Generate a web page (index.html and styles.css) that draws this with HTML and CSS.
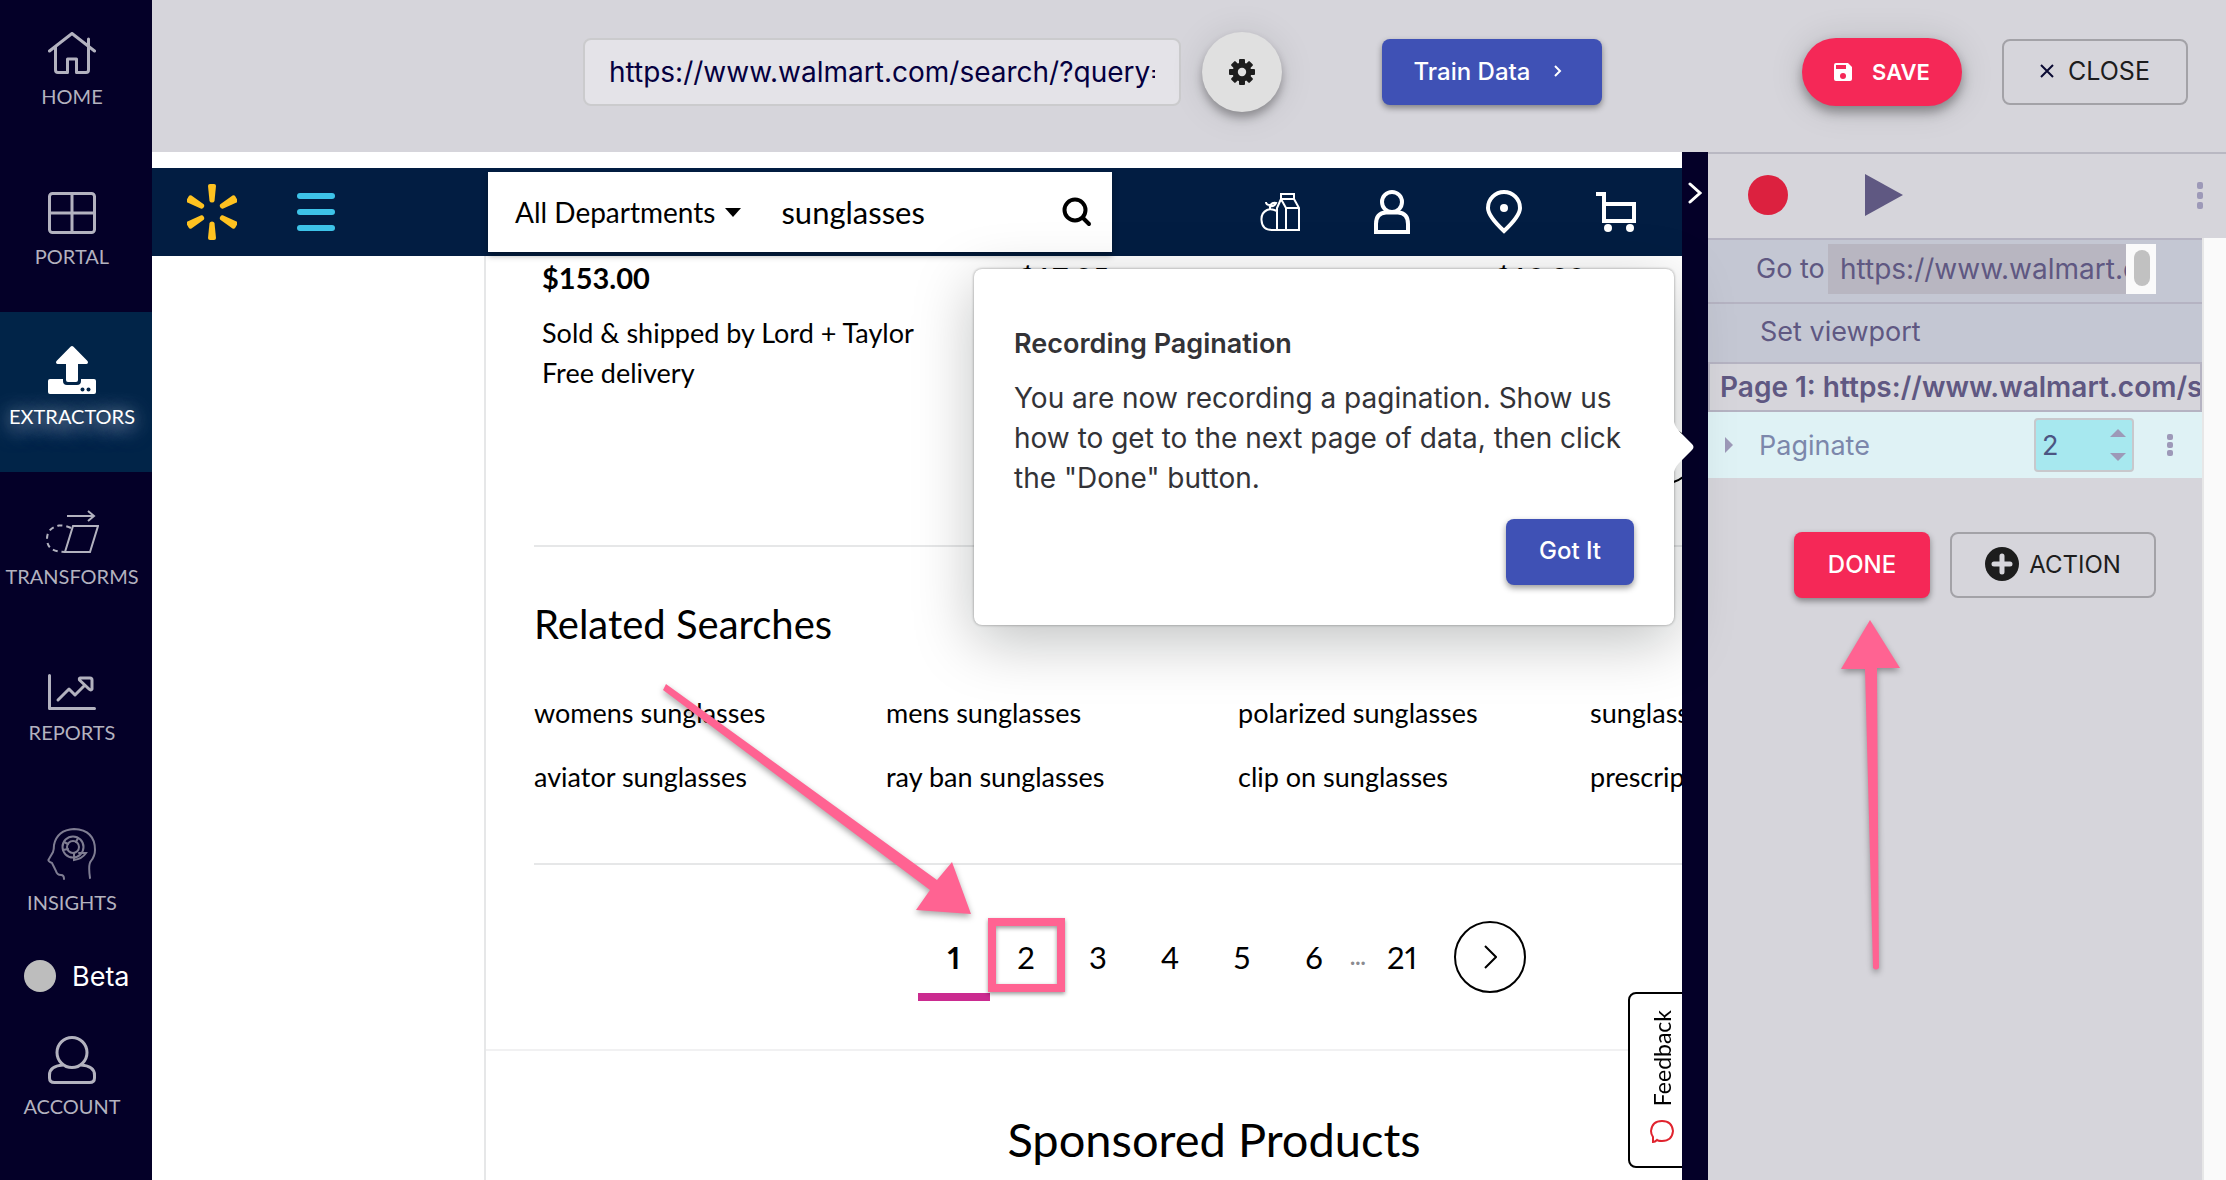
FILE: index.html
```html
<!DOCTYPE html>
<html lang="en">
<head>
  <meta charset="utf-8">
  <title>Extractor recorder</title>
  <link rel="stylesheet" href="styles.css">
</head>
<body>
  <nav class="sidebar">
    <a class="side-item first" href="#">
      <svg width="48" height="42" viewBox="0 0 48 42" fill="none" stroke="currentColor" stroke-width="3" stroke-linecap="round" stroke-linejoin="round"><path d="M1.5 19 24 1.5 46.500 19M7.500 15v23q0 2.500 2.500 2.500h9.500V27h9v13.500H38q2.500 0 2.500-2.500V7"/></svg>
      <span>HOME</span>
    </a>
    <a class="side-item" href="#">
      <svg width="48" height="42" viewBox="0 0 48 42" fill="none" stroke="currentColor" stroke-width="3"><rect x="1.500" y="1.500" width="45" height="39" rx="3"/><path d="M24 1.500v39M1.500 21h45"/></svg>
      <span>PORTAL</span>
    </a>
    <a class="side-item active" href="#">
      <svg width="48" height="48" viewBox="0 0 48 48" fill="currentColor"><path d="M22.500.700q1.500-1.400 3 0L39.500 15q1.300 2.500-1 3H30v16q0 2-2 2h-8q-2 0-2-2V18H9.500q-2.300-.500-1-3z"/><path d="M2 33h13v2q0 4 4 4h10q4 0 4-4v-2h13q2 0 2 2v11q0 2-2 2H2q-2 0-2-2V35q0-2 2-2z"/><circle cx="34.500" cy="43.500" r="2" fill="#012448"/><circle cx="40.500" cy="43.500" r="2" fill="#012448"/></svg>
      <span>EXTRACTORS</span>
    </a>
    <a class="side-item" href="#">
      <svg width="54" height="44" viewBox="0 0 54 44" fill="none" stroke="currentColor" stroke-width="2"><path d="M22 6h27M43 1l6 5-6 5M28 16h25l-8 26H20z"/><path d="M26 18Q20 15 14 15.500 2 18 2 29q0 13 18 13" stroke-dasharray="5 4"/></svg>
      <span>TRANSFORMS</span>
    </a>
    <a class="side-item reports" href="#">
      <svg width="48" height="36" viewBox="0 0 48 36" fill="none" stroke="currentColor" stroke-width="3" stroke-linecap="round" stroke-linejoin="round"><path d="M1.500 1.500v33h45M10 26l11-11 6 6 9-9M32 4h10q2 0 2 2v9q-1 2-3 0L31.500 6Q31 4 32 4z"/></svg>
      <span>REPORTS</span>
    </a>
    <a class="side-item insights" href="#">
      <svg width="50" height="52" viewBox="0 0 50 52" fill="none" stroke="currentColor" stroke-width="2" stroke-linecap="round" opacity=".7"><path d="M17 51q0-4-3-4-4 0-5-4l-2-4-2-4q-5-2-3-4l4-7q1-3 1-7Q10 2 27 1q21 1 21 21 0 6-4 11-3 3-1 17"/><circle cx="26" cy="19" r="10.500"/><circle cx="26" cy="19" r="6"/><path d="M17 14l4 2M31 10l-2 4M27 25v7q8-1 12-7h-7M16 22l5-1"/></svg>
      <span>INSIGHTS</span>
    </a>
    <label class="beta"><input type="checkbox"><span>Beta</span></label>
    <a class="side-item account" href="#">
      <svg width="48" height="48" viewBox="0 0 48 48" fill="none" stroke="currentColor" stroke-width="3"><circle cx="24" cy="16.500" r="15"/><path d="M15 29Q1.500 30 1.500 39v3q0 4.500 5 4.500h35q5 0 5-4.500v-3Q46.500 30 33 29"/></svg>
      <span>ACCOUNT</span>
    </a>
  </nav>

  <div class="main">
    <header class="topbar">
      <input class="url" type="text" aria-label="URL" value="https://www.walmart.com/search/?query=sunglasses">
      <button class="gear" aria-label="Settings">
        <svg width="26" height="26" viewBox="-13 -13 26 26"><g fill="#1d1d1d"><rect x="-3" y="-13" width="6" height="26" rx="1"/><rect x="-13" y="-3" width="26" height="6" rx="1"/><rect x="-3" y="-13" width="6" height="26" rx="1" transform="rotate(45)"/><rect x="-3" y="-13" width="6" height="26" rx="1" transform="rotate(-45)"/><circle r="9.500"/></g><circle r="4.200" fill="#e0e0e0"/></svg>
      </button>
      <button class="btn blue train">Train Data
        <svg width="8" height="12" viewBox="0 0 8 12" fill="none" stroke="#fff" stroke-width="2"><path d="M1 1l5 5-5 5"/></svg>
      </button>
      <button class="btn save">
        <svg width="18" height="18" viewBox="0 0 18 18"><path fill="#fff" d="M2 0h12l4 4v12q0 2-2 2H2q-2 0-2-2V2q0-2 2-2z"/><path fill="#f52857" d="M2 2h10v4H2z"/><circle cx="9" cy="13" r="3" fill="#f52857"/></svg>
        SAVE
      </button>
      <button class="btn outline close">
        <svg width="14" height="14" viewBox="0 0 14 14" stroke="#0a0a33" stroke-width="2"><path d="M1 1l12 12M13 1L1 13"/></svg>
        CLOSE
      </button>
    </header>

    <div class="workspace">
      <div class="browser">
        <div class="shop-bar">
          <a class="spark" href="#" aria-label="Home">
            <svg width="50" height="56" viewBox="-25 -28 50 56" fill="#ffc220"><g id="ray"><path d="M-4-26q0-2 2-2h4q2 0 2 2L2.500-11q-.500 1.500-2.500 1.500T-2.500-11z"/></g><use href="#ray" transform="rotate(60)"/><use href="#ray" transform="rotate(120)"/><use href="#ray" transform="rotate(180)"/><use href="#ray" transform="rotate(240)"/><use href="#ray" transform="rotate(300)"/></svg>
          </a>
          <button class="burger" aria-label="Menu"><i></i><i></i><i></i></button>
          <form class="search">
            <button type="button" class="dept">All Departments
              <svg width="16" height="9" viewBox="0 0 16 9"><path d="M0 0h16L8 9z"/></svg>
            </button>
            <input type="text" aria-label="Search" value="sunglasses">
            <button type="button" class="find" aria-label="Search">
              <svg width="30" height="30" viewBox="0 0 30 30" fill="none" stroke="#000" stroke-width="4" stroke-linecap="round"><circle cx="13" cy="13" r="10.500"/><path d="M21 21l6 6"/></svg>
            </button>
          </form>
          <div class="shop-icons">
            <svg width="40" height="44" viewBox="0 0 40 44" fill="none" stroke="#fff" stroke-width="2"><path d="M21 4h13v5H21zM21 9l-4 9v22h22V18l-5-9M21 9l5 9v22M26 18h12M17 21q-6-3-10-1-6 3-5.500 10Q2 40 12 40h5M10 19v-4q-4 0-4-3M10 16q4 1 6-3-4-1-6 3z"/></svg>
            <svg width="40" height="44" viewBox="0 0 40 44" fill="none" stroke="#fff" stroke-width="4"><circle cx="20" cy="12" r="10"/><path d="M4 42V34Q4 23 14 22.500h12Q36 23 36 34v8z"/></svg>
            <svg width="40" height="44" viewBox="0 0 40 44" fill="none" stroke="#fff" stroke-width="4"><path d="M20 41Q4 26 4 18a16 16 0 0 1 32 0Q36 26 20 41z"/><circle cx="20" cy="18" r="4" fill="#fff" stroke="none"/></svg>
            <svg width="40" height="44" viewBox="0 0 40 44" fill="none" stroke="#fff" stroke-width="4"><path d="M0 4h8v27h30V14H8"/><circle cx="12" cy="38" r="4" fill="#fff" stroke="none"/><circle cx="34" cy="38" r="4" fill="#fff" stroke="none"/></svg>
          </div>
        </div>

        <div class="results">
          <div class="products">
            <div class="product"><b>$153.00</b><p>Sold &amp; shipped by Lord + Taylor<br>Free delivery</p></div>
            <div class="product"><b>$17.95</b></div>
            <div class="product"><b>$18.98</b></div>
            <button class="carousel-next" aria-label="Next products"></button>
          </div>
          <div class="related">
            <h2>Related Searches</h2>
            <div class="links">
              <a href="#">womens sunglasses</a><a href="#">mens sunglasses</a><a href="#">polarized sunglasses</a><a href="#">sunglasses for men</a>
              <a href="#">aviator sunglasses</a><a href="#">ray ban sunglasses</a><a href="#">clip on sunglasses</a><a href="#">prescription glasses</a>
            </div>
          </div>
          <div class="pages">
            <a class="current" href="#">1</a>
            <a class="marked" href="#">2</a>
            <a href="#">3</a>
            <a href="#">4</a>
            <a href="#">5</a>
            <a href="#">6</a>
            <span class="dots">...</span>
            <a href="#">21</a>
            <button class="next" aria-label="Next page">
              <svg width="14" height="24" viewBox="0 0 14 24" fill="none" stroke="#000" stroke-width="2"><path d="M2 1l11 11L2 23"/></svg>
            </button>
          </div>
          <h2 class="sponsored">Sponsored Products</h2>
        </div>

        <button class="feedback">
          <span>Feedback</span>
          <svg width="24" height="24" viewBox="0 0 24 24" fill="none" stroke="#e0232e" stroke-width="2"><path d="M3 22V17Q1 14 1 11 2 1 12 1t11 10q-1 10-11 10-4 0-5-1-2 2-4 2z"/></svg>
        </button>
      </div>

      <button class="divider" aria-label="Collapse panel">
        <svg width="14" height="22" viewBox="0 0 14 22" fill="none" stroke="#fff" stroke-width="3" stroke-linecap="round"><path d="M2 2l10 9-10 9"/></svg>
      </button>

      <aside class="panel">
        <div class="tools">
          <button class="record" aria-label="Record"></button>
          <button class="play" aria-label="Play"><svg width="38" height="42" viewBox="0 0 38 42"><path fill="#5f5882" d="M0 0l38 21L0 42z"/></svg></button>
          <button class="more" aria-label="More"><i></i><i></i><i></i></button>
        </div>
        <div class="panel-body">
          <div class="steps">
            <div class="step goto">
              <label for="goto">Go to</label>
              <input id="goto" type="text" value="https://www.walmart.com/search/">
              <span class="mini-scroll"><i></i></span>
            </div>
            <div class="step viewport">Set viewport</div>
            <div class="page-title">Page 1: https://www.walmart.com/search/</div>
            <div class="step paginate">
              <svg class="caret" width="8" height="16" viewBox="0 0 8 16"><path fill="#9d99b8" d="M0 0l8 8-8 8z"/></svg>
              <label for="count">Paginate</label>
              <span class="count">
                <input id="count" type="number" value="2">
                <svg width="16" height="32" viewBox="0 0 16 32" fill="#9d99b8"><path d="M0 8l8-8 8 8zM0 24h16l-8 8z"/></svg>
              </span>
              <button class="more" aria-label="Step menu"><i></i><i></i><i></i></button>
            </div>
            <div class="actions">
              <button class="btn done">DONE</button>
              <button class="btn outline add">
                <svg width="34" height="34" viewBox="0 0 34 34"><circle cx="17" cy="17" r="17" fill="#1d1d1d"/><path d="M17 9v16M9 17h16" stroke="#d6d5db" stroke-width="5" stroke-linecap="round"/></svg>
                ACTION
              </button>
            </div>
          </div>
          <div class="track"></div>
        </div>
      </aside>

      <div class="popover">
        <h3>Recording Pagination</h3>
        <p>You are now recording a pagination. Show us how to get to the next page of data, then click the "Done" button.</p>
        <button class="btn blue">Got It</button>
        <svg class="tip" width="21" height="60" viewBox="0 0 21 60" fill="#fff"><path d="M0 0q1 9 6 14l13 13q3 3 0 6L6 46q-5 5-6 14z"/></svg>
      </div>
    </div>
  </div>

  <!-- tutorial arrows -->
  <svg class="arrows" width="2226" height="1180" viewBox="0 0 2226 1180" fill="#ff6392">
    <path d="M666 684 937 880 952 862 971 914 916 910 930 890 663 690z"/>
    <path d="M1870 620 1900 668 1877 668 1879 968q-3 3-6 0L1865 669 1841 669z"/>
  </svg>
</body>
</html>
```
FILE: styles.css
```css
* {
  box-sizing: border-box;
}

body {
  margin: 0;
  display: flex;
  height: 100vh;
  overflow: hidden;
  font-family: Inter, sans-serif;
  font-size: 27px;
  color: #333337;
}

a {
  color: inherit;
  text-decoration: none;
}

button,
input {
  font: inherit;
  color: inherit;
  margin: 0;
  padding: 0;
  border: 0;
  background: none;
  outline: none;
}

svg {
  flex: none;
}

/* sidebar */
.sidebar {
  flex: none;
  width: 152px;
  background: #040028;
  color: #b3b2bf;
}

.side-item {
  display: flex;
  flex-direction: column;
  align-items: center;
  justify-content: flex-end;
  gap: 10px;
  height: 160px;
  padding: 0 8px 44px 0;
  font-family: Lato, sans-serif;
  font-size: 20px;
  line-height: 24px;
}

.side-item.first {
  height: 152px;
}

.side-item.active {
  background: #012448;
  color: #fff;
}

.side-item.active span {
  text-shadow: 0 0 20px rgba(255, 255, 255, 0.8), 0 8px 20px rgba(200, 190, 255, 0.6);
}

.side-item.reports {
  height: 156px;
}

.side-item.insights {
  height: 170px;
}

.side-item.account {
  height: 168px;
}

.beta {
  display: flex;
  align-items: center;
  gap: 16px;
  height: 36px;
  padding-left: 24px;
  color: #fff;
  font-size: 27px;
}

.beta input {
  appearance: none;
  width: 32px;
  height: 32px;
  border-radius: 50%;
  background: #bdbdbd;
}

/* top bar */
.main {
  flex: 1;
  min-width: 0;
  display: flex;
  flex-direction: column;
}

.topbar {
  flex: none;
  display: flex;
  align-items: center;
  justify-content: flex-end;
  height: 152px;
  padding: 0 38px 8px 0;
  background: #d6d5db;
}

.url {
  width: 598px;
  height: 68px;
  padding: 0 24px;
  border: 2px solid #cbcbcd;
  border-radius: 8px;
  background: #e4e3e8;
  color: #05003f;
  font-size: 28px;
}

.gear {
  display: flex;
  align-items: center;
  justify-content: center;
  width: 80px;
  height: 80px;
  margin: 0 100px 0 21px;
  border-radius: 50%;
  background: #e0e0e0;
  box-shadow: 0 6px 10px rgba(0, 0, 0, 0.3), 0 2px 36px rgba(0, 0, 0, 0.1);
}

.btn {
  display: flex;
  align-items: center;
  justify-content: center;
  height: 66px;
  padding-bottom: 2px;
  border-radius: 8px;
  font-size: 24px;
}

.blue {
  background: #3f51b5;
  color: #fff;
  font-weight: 500;
  box-shadow: 0 3px 6px rgba(0, 0, 0, 0.4);
}

.train {
  gap: 24px;
  width: 220px;
  padding-right: 8px;
}

.save {
  gap: 20px;
  width: 160px;
  height: 68px;
  margin: 0 40px 0 200px;
  padding: 0;
  border-radius: 34px;
  background: #f52857;
  color: #fff;
  font-size: 22px;
  font-weight: 600;
  box-shadow: 0 6px 12px rgba(0, 0, 0, 0.35), 0 2px 36px rgba(0, 0, 0, 0.12);
}

.outline {
  border: 2px solid #a3a2a7;
  color: #1d1d1d;
}

.close {
  gap: 14px;
  width: 186px;
  font-size: 25px;
}

/* recorded page */
.workspace {
  position: relative;
  flex: 1;
  min-height: 0;
  display: flex;
}

.browser {
  position: relative;
  flex: 1;
  min-width: 0;
  overflow: hidden;
  padding-top: 16px;
  background: #fff;
  color: #000;
  font-family: Lato, sans-serif;
}

.shop-bar {
  display: flex;
  align-items: center;
  height: 88px;
  padding: 0 46px 0 35px;
  background: #021d42;
}

.spark {
  display: flex;
}

.burger {
  display: flex;
  flex-direction: column;
  gap: 10px;
  width: 38px;
  margin: 0 153px 0 60px;
}

.burger i {
  height: 6px;
  border-radius: 3px;
  background: #3dc3e8;
}

.search {
  flex: none;
  display: flex;
  align-items: center;
  width: 624px;
  height: 80px;
  padding: 0 20px 0 27px;
  background: #fff;
  box-shadow: 0 4px 6px rgba(0, 0, 0, 0.3);
}

.dept {
  display: flex;
  align-items: center;
  gap: 10px;
  font-size: 28px;
}

.search input {
  flex: 1;
  min-width: 0;
  margin-left: 40px;
  font-size: 31px;
}

.find {
  display: flex;
}

.shop-icons {
  display: flex;
  gap: 72px;
  margin-left: auto;
}

.results {
  width: 1474px;
  height: 100%;
  margin-left: 332px;
  border-left: 2px solid #e6e7e8;
}

.products {
  position: relative;
  display: grid;
  grid-template-columns: repeat(3, 476px);
  margin-left: 48px;
  padding: 2px 0 152px 8px;
  border-bottom: 2px solid #e6e7e8;
  font-size: 27px;
  line-height: 40px;
}

.product b {
  font-size: 29px;
}

.product p {
  margin: 14px 0 0;
}

.carousel-next {
  position: absolute;
  top: 172px;
  left: 1104px;
  width: 56px;
  height: 56px;
  border: 2px solid #000;
  border-radius: 50%;
}

.related {
  margin-left: 48px;
  padding: 53px 0 66px;
  border-bottom: 2px solid #e6e7e8;
}

.related h2,
.sponsored {
  margin: 0;
  font-size: 40px;
  font-weight: 400;
  line-height: 48px;
}

.links {
  display: grid;
  grid-template-columns: repeat(4, 352px);
  row-gap: 24px;
  margin-top: 45px;
  font-size: 27px;
  line-height: 40px;
}

.pages {
  display: flex;
  justify-content: center;
  padding: 56px 0 48px;
  border-bottom: 2px solid #f1f1f2;
  font-size: 31px;
  font-variant-numeric: proportional-nums;
}

.pages a {
  position: relative;
  width: 72px;
  height: 80px;
  line-height: 72px;
  text-align: center;
}

.pages .current {
  border-bottom: 8px solid #cb2b90;
  font-weight: 700;
}

.pages .marked::after {
  content: "";
  position: absolute;
  inset: -3px -3px 9px -2px;
  border: 8px solid #ff6392;
  box-shadow: 0 2px 4px rgba(0, 0, 0, 0.4), inset 0 2px 4px rgba(0, 0, 0, 0.4);
}

.pages .dots {
  width: 16px;
  color: #8b8b90;
  font-size: 22px;
  font-weight: 700;
  line-height: 72px;
}

.next {
  display: flex;
  align-items: center;
  justify-content: center;
  width: 72px;
  height: 72px;
  margin-left: 16px;
  border: 2px solid #000;
  border-radius: 50%;
}

.sponsored {
  padding: 64px 16px 0 0;
  font-size: 47px;
  text-align: center;
}

.feedback {
  position: absolute;
  right: -2px;
  bottom: 12px;
  display: flex;
  flex-direction: column;
  align-items: center;
  justify-content: space-between;
  width: 56px;
  height: 176px;
  padding: 16px 0 22px 12px;
  border: 2px solid #000;
  border-radius: 8px 0 0 8px;
  background: #fff;
  font-size: 23px;
}

.feedback span {
  writing-mode: vertical-rl;
  transform: rotate(180deg);
}

.divider {
  flex: none;
  display: flex;
  justify-content: center;
  width: 26px;
  padding-top: 30px;
  background: #040028;
}

/* recorder panel */
.panel {
  flex: none;
  display: flex;
  flex-direction: column;
  width: 518px;
  background: #d6d5db;
  color: #5f5882;
}

.tools {
  display: flex;
  align-items: center;
  height: 86px;
  padding: 0 23px 2px 40px;
  border-top: 2px solid #b9b8c2;
}

.record {
  width: 40px;
  height: 40px;
  border-radius: 50%;
  background: #dc213f;
}

.play {
  display: flex;
  margin-left: 77px;
}

.more {
  display: flex;
  flex-direction: column;
  gap: 2px;
}

.more i {
  width: 6px;
  height: 6px;
  border-radius: 2px;
  background: #9d99b8;
}

.tools .more {
  margin-left: auto;
  gap: 3px;
}

.tools .more i {
  height: 7px;
}

.panel-body {
  flex: 1;
  display: flex;
}

.steps {
  flex: 1;
  min-width: 0;
}

.track {
  width: 24px;
  border-left: 2px solid #e7e7e7;
  background: #fafafa;
}

.step {
  display: flex;
  align-items: center;
  border-top: 2px solid #b5b3c2;
  background: #c4c7d3;
}

.goto {
  height: 64px;
  padding: 0 46px 8px 48px;
  align-items: flex-end;
  line-height: 50px;
}

.goto label {
  width: 72px;
}

.goto input {
  flex: 1;
  min-width: 0;
  height: 50px;
  padding-left: 12px;
  background: #b8b6c1;
  font-size: 28px;
}

.mini-scroll {
  display: flex;
  width: 30px;
  height: 50px;
  padding: 6px 6px 8px 8px;
  background: #fafafa;
}

.mini-scroll i {
  flex: 1;
  border-radius: 8px;
  background: #c1c1c1;
}

.viewport {
  height: 60px;
  padding: 0 0 4px 52px;
}

.page-title {
  height: 50px;
  padding-left: 10px;
  border: 2px solid #b5b3c2;
  overflow: hidden;
  white-space: nowrap;
  font-size: 28px;
  font-weight: 600;
  line-height: 46px;
}

.paginate {
  height: 66px;
  padding: 0 29px 0 17px;
  border-top: 0;
  background: #dff2f5;
  color: #7c87ab;
}

.paginate label {
  margin-left: 26px;
}

.count {
  display: flex;
  align-items: center;
  width: 100px;
  height: 54px;
  margin-left: auto;
  padding: 0 6px;
  border: 2px solid #c8c8cc;
  border-radius: 4px;
  background: #a7e8ef;
}

.count input {
  flex: 1;
  min-width: 0;
  appearance: textfield;
  color: #4c5582;
}

.paginate .more {
  margin-left: 33px;
}

.actions {
  display: flex;
  justify-content: flex-end;
  gap: 20px;
  padding: 54px 46px 0 0;
}

.done {
  width: 136px;
  background: #f52857;
  color: #fff;
  font-weight: 500;
  box-shadow: 0 3px 6px rgba(0, 0, 0, 0.4);
}

.add {
  gap: 10px;
  width: 206px;
}

/* popover over the page */
.popover {
  position: absolute;
  top: 117px;
  right: 552px;
  width: 700px;
  padding: 55px 40px 40px;
  border-radius: 8px;
  background: #fff;
  font-size: 27px;
  line-height: 40px;
  box-shadow: 0 0 3px rgba(0, 0, 0, 0.4), 0 16px 60px rgba(0, 10, 10, 0.25);
}

.popover h3 {
  margin: 0 0 14px;
  font-size: 27px;
  font-weight: 600;
}

.popover p {
  margin: 0 0 21px;
  font-size: 28px;
}

.popover .btn {
  width: 128px;
  margin-left: auto;
}

.tip {
  position: absolute;
  top: 148px;
  right: -20px;
}

.arrows {
  position: absolute;
  top: 0;
  left: 0;
  pointer-events: none;
  filter: drop-shadow(0 3px 3px rgba(0, 0, 0, 0.35));
}
```
